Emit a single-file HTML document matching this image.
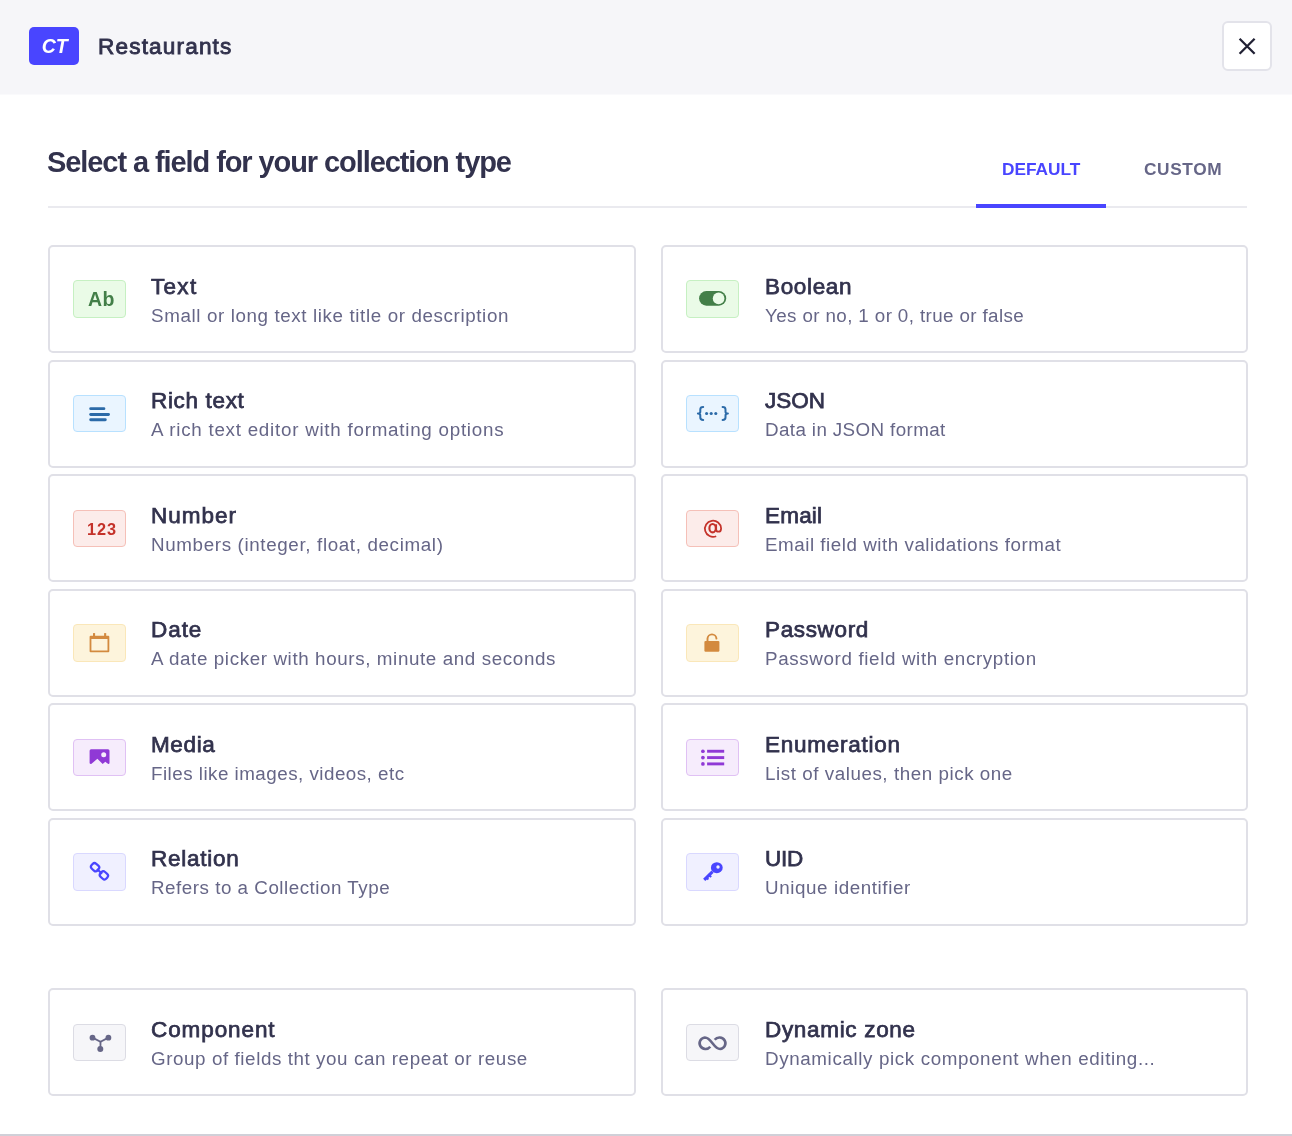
<!DOCTYPE html>
<html><head><meta charset="utf-8"><style>
*{box-sizing:border-box;margin:0;padding:0}
.tt,.ds,#title,#rest,.tab,#badge,.ict,.icn{will-change:transform}
html,body{width:1292px;height:1136px;overflow:hidden;background:#fff;font-family:"Liberation Sans",sans-serif}
.abs{position:absolute}
#hdr{position:absolute;left:0;top:0;width:1292px;height:94.3px;background:#f6f6f9}
#badge{position:absolute;left:29px;top:27px;width:50px;height:38px;border-radius:5px;background:#4945ff;color:#fff;font-weight:bold;font-style:italic;font-size:19.5px;line-height:38px;text-align:center;letter-spacing:0.1px;padding-left:1.6px}
#rest{position:absolute;left:98.2px;top:36px;font-size:22.6px;line-height:22.6px;font-weight:normal;-webkit-text-stroke:0.85px #32324d;letter-spacing:1.15px;color:#32324d;white-space:nowrap}
#close{position:absolute;left:1222px;top:21px;width:50px;height:50px;border:2px solid #e3e3ea;border-radius:6px;background:#fff}
#title{position:absolute;left:47.4px;top:147.8px;font-size:29px;line-height:29px;font-weight:bold;color:#32324d;white-space:nowrap;letter-spacing:-1.08px}
.tab{position:absolute;top:161px;font-size:17.3px;line-height:17.3px;font-weight:bold;white-space:nowrap}
#divider{position:absolute;left:48px;top:206px;width:1199px;height:2px;background:#eaeaef}
#tabbar{position:absolute;left:976px;top:204px;width:130px;height:4px;background:#4945ff}
.card{position:absolute;width:587.5px;height:108.0px;border:2px solid #e0e0e7;border-radius:5px;background:#fff}
.ib{position:absolute;left:22.8px;top:33.45px;width:53px;height:37.5px;border:1px solid;border-radius:4px}
.ib svg{position:absolute;left:-1px;top:-1px}
.tt{position:absolute;left:101.4px;top:28.5px;font-size:22.5px;line-height:22.5px;font-weight:normal;-webkit-text-stroke:0.75px #32324d;color:#32324d;white-space:nowrap}
.ds{position:absolute;left:101.3px;top:59.7px;font-size:18.8px;line-height:18.8px;color:#666687;white-space:nowrap}
.ict,.icn{position:absolute;white-space:nowrap;font-weight:bold}
.ict{left:14.5px;top:8.5px;font-size:19.5px;line-height:19.5px;letter-spacing:0.3px}
.icn{left:12.8px;top:10px;font-size:16.3px;line-height:16.3px;letter-spacing:0.9px}
#bottom{position:absolute;left:0;top:1134px;width:1292px;height:2px;background:#d0d0d8}
</style></head><body>
<div id="hdr"></div><div style="position:absolute;left:0;top:94px;width:1292px;height:1px;background:#fafafc"></div>
<div id="badge">CT</div>
<div id="rest">Restaurants</div>
<div id="close"><svg width="46" height="46" viewBox="0 0 46 46" style="position:absolute;left:0;top:0"><path d="M15.6 15.7 L30.6 30.7 M30.6 15.7 L15.6 30.7" stroke="#212134" stroke-width="2.3"/></svg></div>
<div id="title">Select a field for your collection type</div>
<div class="tab" style="left:1001.5px;color:#4945ff;letter-spacing:0px">DEFAULT</div>
<div class="tab" style="left:1144px;color:#666687;letter-spacing:0.6px">CUSTOM</div>
<div id="divider"></div>
<div id="tabbar"></div>
<div class="card" style="left:48.0px;top:245.00px;width:587.6px">
<div class="ib" style="background:#eafbe7;border-color:#c6f0c2"><div class="ict" style="color:#437f48">Ab</div></div>
<div class="tt" style="letter-spacing:1.300px">Text</div><div class="ds" style="letter-spacing:0.616px">Small or long text like title or description</div></div>
<div class="card" style="left:661.4px;top:245.00px;width:586.6px">
<div class="ib" style="background:#eafbe7;border-color:#c6f0c2"><svg width="54" height="38" viewBox="0 0 54 38"><rect x="13.1" y="11.1" width="27.1" height="14.6" rx="7.3" fill="#437f48"/><circle cx="32.6" cy="18.4" r="5.8" fill="#eafbe7"/></svg></div>
<div class="tt" style="letter-spacing:0.650px">Boolean</div><div class="ds" style="letter-spacing:0.387px">Yes or no, 1 or 0, true or false</div></div>
<div class="card" style="left:48.0px;top:359.55px;width:587.6px">
<div class="ib" style="background:#eaf5ff;border-color:#b8e1ff"><svg width="54" height="38" viewBox="0 0 54 38"><g stroke="#2b6aa8" stroke-width="2.9" stroke-linecap="round"><line x1="17.7" y1="13.65" x2="30.9" y2="13.65"/><line x1="17.7" y1="19.45" x2="35.5" y2="19.45"/><line x1="17.7" y1="24.75" x2="32.3" y2="24.75"/></g></svg></div>
<div class="tt" style="letter-spacing:0.662px">Rich text</div><div class="ds" style="letter-spacing:0.750px">A rich text editor with formating options</div></div>
<div class="card" style="left:661.4px;top:359.55px;width:586.6px">
<div class="ib" style="background:#eaf5ff;border-color:#b8e1ff"><svg width="54" height="38" viewBox="0 0 54 38"><g fill="none" stroke="#2b6aa8" stroke-width="2" stroke-linecap="round" stroke-linejoin="round"><path d="M17.2 12.1 Q14.3 12.1 14.3 14.5 V16.7 Q14.3 18.6 11.9 18.6 Q14.3 18.6 14.3 20.4 V22.6 Q14.3 25 17.2 25"/><path d="M36.6 12.1 Q39.5 12.1 39.5 14.5 V16.7 Q39.5 18.6 41.9 18.6 Q39.5 18.6 39.5 20.4 V22.6 Q39.5 25 36.6 25"/></g><g fill="#2b6aa8"><circle cx="20.6" cy="18.56" r="1.55"/><circle cx="25.2" cy="18.56" r="1.55"/><circle cx="29.8" cy="18.56" r="1.55"/></g></svg></div>
<div class="tt" style="letter-spacing:0.000px">JSON</div><div class="ds" style="letter-spacing:0.389px">Data in JSON format</div></div>
<div class="card" style="left:48.0px;top:474.10px;width:587.6px">
<div class="ib" style="background:#fcecea;border-color:#f5c0b8"><div class="icn" style="color:#c4322a">123</div></div>
<div class="tt" style="letter-spacing:1.000px">Number</div><div class="ds" style="letter-spacing:0.641px">Numbers (integer, float, decimal)</div></div>
<div class="card" style="left:661.4px;top:474.10px;width:586.6px">
<div class="ib" style="background:#fcecea;border-color:#f5c0b8"><svg width="54" height="38" viewBox="0 0 54 38"><g fill="none" stroke="#c4322a" stroke-width="1.75"><path d="M30.2 26.2 A8.1 8.1 0 1 1 35.1 18.4 C35.1 20.6 34.1 21.7 32.5 21.7 C31 21.7 30.2 20.8 30.2 19.4 V14.2"/><ellipse cx="26.6" cy="18.2" rx="3.2" ry="4.2" stroke-width="2.1"/></g></svg></div>
<div class="tt" style="letter-spacing:0.200px">Email</div><div class="ds" style="letter-spacing:0.529px">Email field with validations format</div></div>
<div class="card" style="left:48.0px;top:588.65px;width:587.6px">
<div class="ib" style="background:#fdf4dc;border-color:#fae7b9"><svg width="54" height="38" viewBox="0 0 54 38"><path fill-rule="evenodd" fill="#d38a3f" d="M17.6 11.7 H35.3 Q36.3 11.7 36.3 12.7 V27.2 Q36.3 28.2 35.3 28.2 H17.6 Q16.6 28.2 16.6 27.2 V12.7 Q16.6 11.7 17.6 11.7 Z M18.4 15.1 V26.4 H34.5 V15.1 Z"/><rect x="20" y="9.1" width="2.1" height="3" fill="#d38a3f"/><rect x="31.1" y="9.1" width="2.1" height="3" fill="#d38a3f"/></svg></div>
<div class="tt" style="letter-spacing:0.933px">Date</div><div class="ds" style="letter-spacing:0.616px">A date picker with hours, minute and seconds</div></div>
<div class="card" style="left:661.4px;top:588.65px;width:586.6px">
<div class="ib" style="background:#fdf4dc;border-color:#fae7b9"><svg width="54" height="38" viewBox="0 0 54 38"><path d="M21.5 17.5 V14.6 A4.48 4.48 0 0 1 30.45 14.6" fill="none" stroke="#d38a3f" stroke-width="1.9" stroke-linecap="round"/><rect x="18.4" y="16.9" width="15" height="10.8" rx="1.2" fill="#d38a3f"/></svg></div>
<div class="tt" style="letter-spacing:0.643px">Password</div><div class="ds" style="letter-spacing:0.638px">Password field with encryption</div></div>
<div class="card" style="left:48.0px;top:703.20px;width:587.6px">
<div class="ib" style="background:#f6ecfc;border-color:#e0c1f4"><svg width="54" height="38" viewBox="0 0 54 38"><path fill="#9039d6" d="M18.1 10.15 H35 Q36.5 10.15 36.5 11.65 V23.9 Q36.5 25.1 35.2 25.05 L32.3 22.65 L29.7 25.05 L24.4 19.85 L18.2 25.05 Q16.6 25.1 16.6 23.9 V11.65 Q16.6 10.15 18.1 10.15 Z"/><circle cx="30.7" cy="15.85" r="2.5" fill="#f6ecfc"/></svg></div>
<div class="tt" style="letter-spacing:0.625px">Media</div><div class="ds" style="letter-spacing:0.483px">Files like images, videos, etc</div></div>
<div class="card" style="left:661.4px;top:703.20px;width:586.6px">
<div class="ib" style="background:#f6ecfc;border-color:#e0c1f4"><svg width="54" height="38" viewBox="0 0 54 38"><g fill="#9039d6"><circle cx="16.9" cy="12.25" r="1.85"/><circle cx="16.9" cy="18.6" r="1.85"/><circle cx="16.9" cy="24.9" r="1.85"/></g><g stroke="#9039d6" stroke-width="2.9"><line x1="21.1" y1="12.25" x2="38.2" y2="12.25"/><line x1="21.1" y1="18.6" x2="38.2" y2="18.6"/><line x1="21.1" y1="24.9" x2="38.2" y2="24.9"/></g></svg></div>
<div class="tt" style="letter-spacing:0.750px">Enumeration</div><div class="ds" style="letter-spacing:0.554px">List of values, then pick one</div></div>
<div class="card" style="left:48.0px;top:817.75px;width:587.6px">
<div class="ib" style="background:#f0f0ff;border-color:#d9d8ff"><svg width="54" height="38" viewBox="0 0 54 38"><g fill="none" stroke="#4945ff" stroke-width="2.2"><rect x="18.1" y="10.9" width="8" height="6.6" rx="2.6" transform="rotate(42 22.1 14.2)"/><rect x="26.9" y="19.1" width="8" height="6.6" rx="2.6" transform="rotate(42 30.9 22.4)"/><line x1="23.9" y1="16" x2="29.1" y2="20.7"/></g></svg></div>
<div class="tt" style="letter-spacing:0.743px">Relation</div><div class="ds" style="letter-spacing:0.519px">Refers to a Collection Type</div></div>
<div class="card" style="left:661.4px;top:817.75px;width:586.6px">
<div class="ib" style="background:#f0f0ff;border-color:#d9d8ff"><svg width="54" height="38" viewBox="0 0 54 38"><ellipse cx="30.8" cy="14.7" rx="5.9" ry="5.5" fill="#4945ff"/><circle cx="32" cy="13.95" r="1.7" fill="#f0f0ff"/><path d="M26.6 18.6 L18.2 26.8" stroke="#4945ff" stroke-width="3.1"/><path d="M23.2 22.2 L25.2 24 M20.6 24.8 L22.4 26.4" stroke="#4945ff" stroke-width="2"/></svg></div>
<div class="tt" style="letter-spacing:-0.200px">UID</div><div class="ds" style="letter-spacing:0.594px">Unique identifier</div></div>
<div class="card" style="left:48.0px;top:988.10px;width:587.6px">
<div class="ib" style="background:#f6f6f9;border-color:#dcdce4"><svg width="54" height="38" viewBox="0 0 54 38"><g stroke="#666687" stroke-width="1.8" fill="none"><polyline points="19.5,13.65 27.5,17.75 35.4,13.65"/><line x1="27.5" y1="17.75" x2="27.4" y2="25"/></g><g fill="#666687"><circle cx="19.5" cy="13.65" r="2.9"/><circle cx="35.4" cy="13.65" r="2.9"/><circle cx="27.3" cy="25.05" r="3"/></g></svg></div>
<div class="tt" style="letter-spacing:0.912px">Component</div><div class="ds" style="letter-spacing:0.583px">Group of fields tht you can repeat or reuse</div></div>
<div class="card" style="left:661.4px;top:988.10px;width:586.6px">
<div class="ib" style="background:#f6f6f9;border-color:#dcdce4"><svg width="54" height="38" viewBox="0 0 54 38"><path d="M28.7 15.75 A6 5.75 0 1 1 34.1 25.0 C31.2 25.0 29.5 23.2 26.5 19.25 C23.5 15.3 21.8 13.5 18.9 13.5 A6 5.75 0 1 0 24.3 22.75" fill="none" stroke="#666687" stroke-width="2.6"/></svg></div>
<div class="tt" style="letter-spacing:0.682px">Dynamic zone</div><div class="ds" style="letter-spacing:0.622px">Dynamically pick component when editing...</div></div>

<div id="bottom"></div>
</body></html>
